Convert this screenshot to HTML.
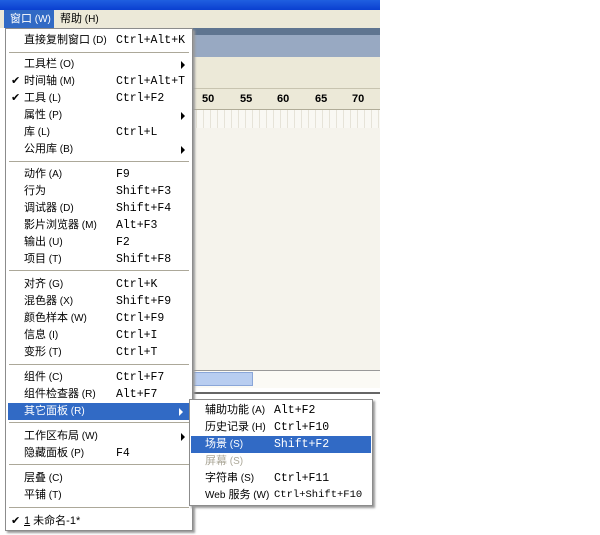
<!DOCTYPE html><html><head><meta charset="utf-8"><style>
*{margin:0;padding:0;box-sizing:border-box}
body{width:600px;height:535px;background:#fff;position:relative;overflow:hidden;font-family:"Liberation Sans","WenQuanYi Zen Hei","Noto Sans CJK SC",sans-serif;font-size:11px;color:#000}
.a{position:absolute}
.it{position:absolute;left:0;right:0;height:17px;line-height:17px;white-space:nowrap}
.it .l{position:absolute;left:18px;font-size:11px}
.it .l b{font-weight:normal;font-size:10px}
.it .k{position:absolute;left:110px;font-family:"Liberation Mono",monospace;font-size:11.5px;line-height:17px}
.it .ar{position:absolute;right:7px;top:5px;width:0;height:0;border-left:4px solid #000;border-top:4px solid transparent;border-bottom:4px solid transparent}
.sep{position:absolute;left:3px;right:3px;height:2px;border-top:1px solid #aca899;border-bottom:1px solid #fff}
.hl{background:#316ac5;color:#fff}
.hl .ar{border-left-color:#fff}
.ck{position:absolute;left:5px}
.sub .l{left:15px}.sub .k{left:84px}
</style></head><body>
<div class="a" style="left:0;top:0;width:380px;height:10px;background:linear-gradient(#1f5fe0,#0a3fd0)"></div>
<div class="a" style="left:0;top:10px;width:380px;height:18px;background:#ece9d8"></div>
<div class="a hl" style="left:4px;top:10px;width:50px;height:18px;line-height:18px;padding-left:6px">窗口<span style="font-size:10px"> (W)</span></div>
<div class="a" style="left:60px;top:10px;height:18px;line-height:18px">帮助<span style="font-size:10px"> (H)</span></div>
<div class="a" style="left:190px;top:28px;width:190px;height:7px;background:#5f7590"></div>
<div class="a" style="left:190px;top:35px;width:190px;height:22px;background:#98a9c2"></div>
<div class="a" style="left:190px;top:57px;width:190px;height:31px;background:#ece9d8"></div>
<div class="a" style="left:190px;top:88px;width:190px;height:22px;background:#ece9d8;border-top:1px solid #c8c4b0;border-bottom:1px solid #b0ac98;font-weight:bold;font-size:11px">
<span class="a" style="left:12px;top:4px">50</span><span class="a" style="left:50px;top:4px">55</span><span class="a" style="left:87px;top:4px">60</span><span class="a" style="left:125px;top:4px">65</span><span class="a" style="left:162px;top:4px">70</span></div>
<div class="a" style="left:190px;top:110px;width:190px;height:18px;background:repeating-linear-gradient(90deg,#f9f8f3 0 6px,#e6e3d8 6px 7px)"></div>
<div class="a" style="left:190px;top:128px;width:190px;height:242px;background:#f5f3ec"></div>
<div class="a" style="left:190px;top:370px;width:190px;height:1px;background:#999"></div>
<div class="a" style="left:190px;top:371px;width:190px;height:17px;background:#fbfaf5"></div>
<div class="a" style="left:192px;top:372px;width:61px;height:14px;background:#b8cdf0;border:1px solid #8aa6d8"></div>
<div class="a" style="left:190px;top:392px;width:190px;height:2px;background:#666"></div>

<div class="a" style="left:5px;top:28px;width:188px;height:503px;background:#fff;border:1px solid #8c8c8c;box-shadow:2px 2px 2px #999">
<div class="it" style="top:3px"><span class="l">直接复制窗口<b> (D)</b></span><span class="k">Ctrl+Alt+K</span></div>
<div class="sep" style="top:23px"></div>
<div class="it" style="top:27px"><span class="l">工具栏<b> (O)</b></span><i class="ar"></i></div>
<div class="it" style="top:44px"><span class="ck">✔</span><span class="l">时间轴<b> (M)</b></span><span class="k">Ctrl+Alt+T</span></div>
<div class="it" style="top:61px"><span class="ck">✔</span><span class="l">工具<b> (L)</b></span><span class="k">Ctrl+F2</span></div>
<div class="it" style="top:78px"><span class="l">属性<b> (P)</b></span><i class="ar"></i></div>
<div class="it" style="top:95px"><span class="l">库<b> (L)</b></span><span class="k">Ctrl+L</span></div>
<div class="it" style="top:112px"><span class="l">公用库<b> (B)</b></span><i class="ar"></i></div>
<div class="sep" style="top:132px"></div>
<div class="it" style="top:137px"><span class="l">动作<b> (A)</b></span><span class="k">F9</span></div>
<div class="it" style="top:154px"><span class="l">行为</span><span class="k">Shift+F3</span></div>
<div class="it" style="top:171px"><span class="l">调试器<b> (D)</b></span><span class="k">Shift+F4</span></div>
<div class="it" style="top:188px"><span class="l">影片浏览器<b> (M)</b></span><span class="k">Alt+F3</span></div>
<div class="it" style="top:205px"><span class="l">输出<b> (U)</b></span><span class="k">F2</span></div>
<div class="it" style="top:222px"><span class="l">项目<b> (T)</b></span><span class="k">Shift+F8</span></div>
<div class="sep" style="top:241px"></div>
<div class="it" style="top:247px"><span class="l">对齐<b> (G)</b></span><span class="k">Ctrl+K</span></div>
<div class="it" style="top:264px"><span class="l">混色器<b> (X)</b></span><span class="k">Shift+F9</span></div>
<div class="it" style="top:281px"><span class="l">颜色样本<b> (W)</b></span><span class="k">Ctrl+F9</span></div>
<div class="it" style="top:298px"><span class="l">信息<b> (I)</b></span><span class="k">Ctrl+I</span></div>
<div class="it" style="top:315px"><span class="l">变形<b> (T)</b></span><span class="k">Ctrl+T</span></div>
<div class="sep" style="top:335px"></div>
<div class="it" style="top:340px"><span class="l">组件<b> (C)</b></span><span class="k">Ctrl+F7</span></div>
<div class="it" style="top:357px"><span class="l">组件检查器<b> (R)</b></span><span class="k">Alt+F7</span></div>
<div class="it hl" style="top:374px;left:2px;right:2px"><span class="l" style="left:16px">其它面板<b> (R)</b></span><i class="ar"></i></div>
<div class="sep" style="top:393px"></div>
<div class="it" style="top:399px"><span class="l">工作区布局<b> (W)</b></span><i class="ar"></i></div>
<div class="it" style="top:416px"><span class="l">隐藏面板<b> (P)</b></span><span class="k">F4</span></div>
<div class="sep" style="top:435px"></div>
<div class="it" style="top:441px"><span class="l">层叠<b> (C)</b></span></div>
<div class="it" style="top:458px"><span class="l">平铺<b> (T)</b></span></div>
<div class="sep" style="top:478px"></div>
<div class="it" style="top:484px"><span class="ck">✔</span><span class="l"><u>1</u> 未命名-1*</span></div>
</div>

<div class="a sub" style="left:189px;top:399px;width:184px;height:107px;background:#fff;border:1px solid #8c8c8c;box-shadow:2px 2px 2px #999">
<div class="it sub" style="top:2px"><span class="l">辅助功能<b> (A)</b></span><span class="k">Alt+F2</span></div>
<div class="it sub" style="top:19px"><span class="l">历史记录<b> (H)</b></span><span class="k">Ctrl+F10</span></div>
<div class="it sub hl" style="top:36px;left:1px;right:1px"><span class="l" style="left:14px">场景<b> (S)</b></span><span class="k" style="left:83px">Shift+F2</span></div>
<div class="it sub" style="top:53px;color:#aca899"><span class="l">屏幕<b> (S)</b></span></div>
<div class="it sub" style="top:70px"><span class="l">字符串<b> (S)</b></span><span class="k">Ctrl+F11</span></div>
<div class="it sub" style="top:87px"><span class="l"><b>Web</b> 服务<b> (W)</b></span><span class="k" style="font-size:10.5px">Ctrl+Shift+F10</span></div>
</div>
</body></html>
